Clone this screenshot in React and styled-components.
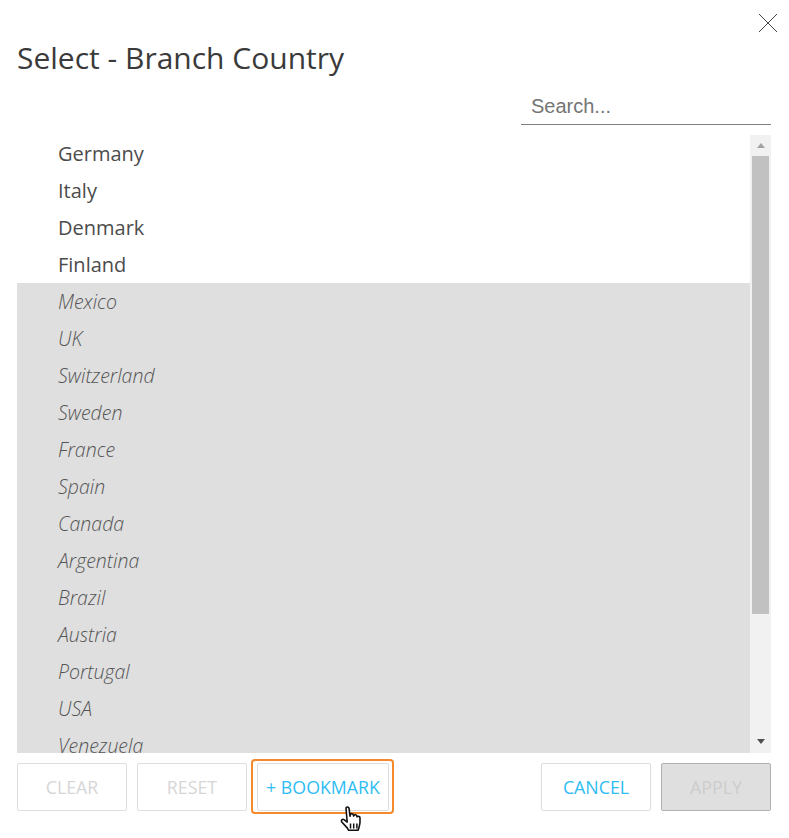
import React from 'react';
import styled, { createGlobalStyle } from 'styled-components';

const GlobalStyle = createGlobalStyle`
  html, body {
    margin: 0;
    padding: 0;
    background: #fff;
  }
  * {
    box-sizing: border-box;
  }
`;

const Dialog = styled.div`
  position: relative;
  width: 789px;
  height: 838px;
  padding: 0 18px 0 17px;
  font-family: "Open Sans", sans-serif;
  overflow: hidden;
`;

const CloseButton = styled.button`
  position: absolute;
  top: 13px;
  right: 11px;
  width: 20px;
  height: 20px;
  padding: 0;
  border: 0;
  background: none;
`;

const Title = styled.h1`
  margin: 0;
  padding-top: 38px;
  height: 81px;
  font-size: 30px;
  line-height: 40px;
  font-weight: 400;
  color: #3a3a3a;
`;

const SearchRow = styled.div`
  display: flex;
  justify-content: flex-end;
  height: 54px;
`;

const SearchInput = styled.input`
  width: 250px;
  height: 44px;
  padding: 7px 10px 0;
  border: 0;
  border-bottom: 1px solid #808080;
  outline: none;
  font-family: "Liberation Sans", Arial, sans-serif;
  font-size: 20px;
  color: #333;
  &::placeholder {
    color: #757575;
    opacity: 1;
  }
`;

const ListWrap = styled.div`
  display: flex;
  height: 618px;
`;

const List = styled.ul`
  flex: 1;
  margin: 0;
  padding: 0;
  list-style: none;
  overflow: hidden;
`;

const Row = styled.li`
  height: 37px;
  padding-left: 41px;
  font-size: ${props => (props.$excluded ? '19.5px' : '20px')};
  line-height: 37px;
  font-weight: ${props => (props.$excluded ? 300 : 400)};
  font-style: ${props => (props.$excluded ? 'italic' : 'normal')};
  color: ${props => (props.$excluded ? '#555' : '#4c4c4c')};
  background: ${props => (props.$excluded ? '#dfdfdf' : '#fff')};
`;

const Scrollbar = styled.div`
  display: flex;
  flex-direction: column;
  align-items: center;
  width: 21px;
  background: #f1f1f1;
`;

const ScrollArrow = styled.div`
  display: flex;
  flex: none;
  align-items: center;
  justify-content: center;
  width: 100%;
  height: ${props => props.$height}px;
  &::before {
    content: '';
    border-left: 4.5px solid transparent;
    border-right: 4.5px solid transparent;
    ${props => (props.$down ? 'border-top: 5px solid #505050;' : 'border-bottom: 5px solid #a3a3a3;')}
  }
`;

const ScrollThumb = styled.div`
  flex: none;
  width: 17px;
  height: 458px;
  background: #c1c1c1;
`;

const ScrollTrack = styled.div`
  flex: 1;
`;

const Footer = styled.div`
  display: flex;
  gap: 10px;
  padding-top: 10px;
`;

const buttonColor = props => {
  if (props.$active) return '#2fbdf3';
  return props.$solid ? '#cdcdcd' : '#d6d6d6';
};

const Button = styled.button`
  width: ${props => props.$width || '110px'};
  height: 48px;
  padding: 0;
  border: 1px solid ${props => (props.$solid ? '#b0b0b0' : '#dedede')};
  border-radius: 2px;
  background: ${props => (props.$solid ? '#dfdfdf' : '#fff')};
  font-family: "Open Sans", sans-serif;
  font-size: 17.8px;
  font-weight: 400;
  color: ${buttonColor};
`;

const Spacer = styled.div`
  flex: 1;
`;

const BookmarkWrap = styled.div`
  position: relative;
  display: flex;
`;

const Highlight = styled.div`
  position: absolute;
  top: -4px;
  left: -6px;
  width: 143px;
  height: 55px;
  border: 2px solid #f58a2c;
  border-radius: 4px;
  pointer-events: none;
`;

const HandCursor = styled.svg`
  position: absolute;
  top: 42px;
  left: 82px;
  width: 26px;
  height: 30px;
`;

const included = ['Germany', 'Italy', 'Denmark', 'Finland'];
const excluded = [
  'Mexico', 'UK', 'Switzerland', 'Sweden', 'France', 'Spain', 'Canada',
  'Argentina', 'Brazil', 'Austria', 'Portugal', 'USA', 'Venezuela'
];

export default function App() {
  return (
    <Dialog>
      <GlobalStyle />
      <CloseButton aria-label="Close">
        <svg width="20" height="20" viewBox="0 0 20 20">
          <path d="M1 1 L19 19 M19 1 L1 19" stroke="#444" strokeWidth="1" fill="none" />
        </svg>
      </CloseButton>
      <Title>Select - Branch Country</Title>
      <SearchRow>
        <SearchInput placeholder="Search..." />
      </SearchRow>
      <ListWrap>
        <List>
          {included.map(name => <Row key={name}>{name}</Row>)}
          {excluded.map(name => <Row key={name} $excluded>{name}</Row>)}
        </List>
        <Scrollbar>
          <ScrollArrow $height={21} />
          <ScrollThumb />
          <ScrollTrack />
          <ScrollArrow $height={24} $down />
        </Scrollbar>
      </ListWrap>
      <Footer>
        <Button>CLEAR</Button>
        <Button>RESET</Button>
        <BookmarkWrap>
          <Button $active $width="132px">+ BOOKMARK</Button>
          <Highlight />
          <HandCursor viewBox="0 0 26 30">
            <path
              d="M7 3.2c0-1.600 2.800-1.600 3 0l1 8 .4-1.600c.4-1.400 2.800-1.200 3 .4l.2 1 .4-.6c.7-1.100 2.700-.8 2.900.7l.1.7.5-.3c1-.5 2.400.1 2.500 1.400.2 3 .1 6.500-.9 9.300l-1 3H9.500l-1.300-2.300L2.800 17c-1.200-1.500.5-3.400 2.200-2.400l3.200 2.400z"
              fill="#fff"
              stroke="#111"
              strokeWidth="1.600"
              strokeLinejoin="round"
            />
            <path d="M11.500 18.500v5M14.700 18.500v5M17.900 18.500v5" stroke="#111" strokeWidth="1.500" fill="none" />
          </HandCursor>
        </BookmarkWrap>
        <Spacer />
        <Button $active>CANCEL</Button>
        <Button $solid>APPLY</Button>
      </Footer>
    </Dialog>
  );
}
